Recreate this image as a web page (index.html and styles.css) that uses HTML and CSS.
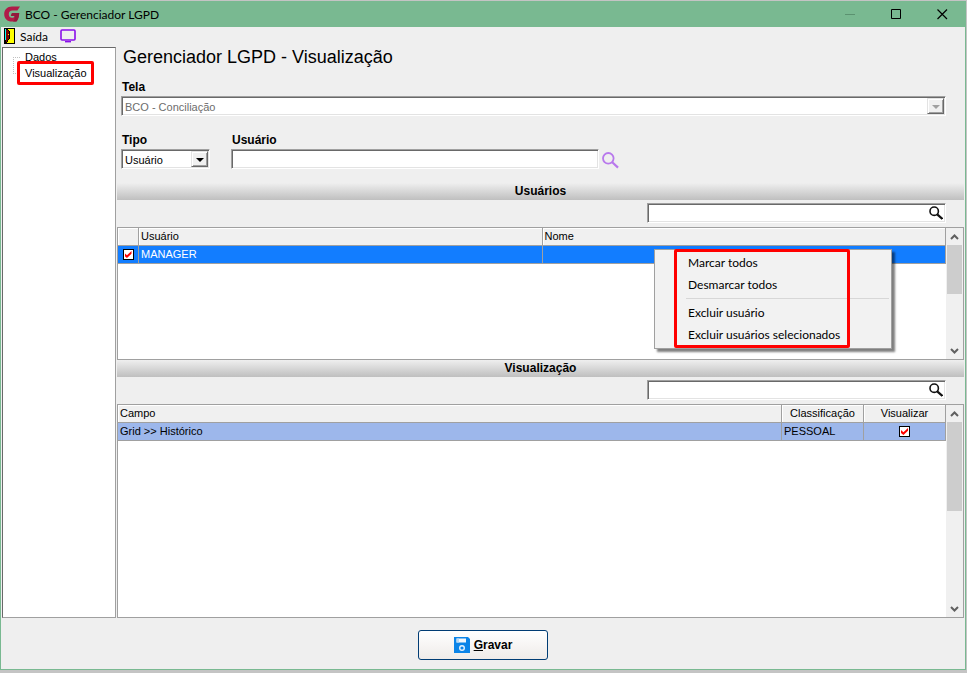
FILE: index.html
```html
<!DOCTYPE html>
<html lang="pt-BR">
  <head>
    <meta charset="UTF-8" />
    <meta name="viewport" content="width=device-width, initial-scale=1.0" />
    <title>BCO - Gerenciador LGPD</title>
    <link rel="stylesheet" href="styles.css">
  </head>

  <body>
    <div class="window">
      <header class="titlebar">
        <svg class="logo" width="16" height="16" viewBox="0 0 16 16">
          <path d="M16 0.4 L8 0.4 C3.2 0.4 0.2 3.6 0.2 8 C0.2 12.6 3.4 15.6 7.8 15.6 L12.4 15.6 C14.2 13.6 15 11 15.2 7 L8 7 L6.8 10 L10.6 10 C10.2 11.4 9.2 11.8 8 11.8 C5.8 11.8 4.8 10.2 4.8 8.2 C4.8 5.8 6.2 4.6 8.4 4.6 L13.4 4.6 Z" fill="#b01c48" />
          <path d="M8 7 L15.2 7 C15 11 14.2 13.6 12.4 15.6 L9 15.6 C10.6 14.4 11 12 10.6 10 L6.8 10 Z" fill="#93183c" />
        </svg>
        <h1>BCO - Gerenciador LGPD</h1>
        <div class="window-buttons">
          <button type="button" aria-label="Minimizar" disabled>
            <svg width="11" height="11" viewBox="0 0 11 11"><path d="M0 5.5H10" stroke="#5b9270" /></svg>
          </button>
          <button type="button" aria-label="Maximizar">
            <svg width="11" height="11" viewBox="0 0 11 11"><path d="M.5 .5H9.5V9.5H.5Z" stroke="#000" fill="none" /></svg>
          </button>
          <button type="button" aria-label="Fechar">
            <svg width="11" height="11" viewBox="0 0 11 11"><path d="M.5 .5L10 10M10 .5L.5 10" stroke="#000" stroke-width="1.2" /></svg>
          </button>
        </div>
      </header>

      <div class="toolbar">
        <button type="button">
          <svg width="11" height="16" viewBox="0 0 11 16" shape-rendering="crispEdges">
            <path d="M0 0H11V16H0Z" fill="#000" />
            <path d="M1 1H10V15H1Z" fill="#ff0" />
            <path d="M1 1H2V12H1Z" fill="#0ff" />
            <path d="M2 1H4V2H5V3H6V11H5V12H4V14H3V15H1V12H2Z" fill="#000" />
            <path d="M2 2H4V3H5V11H4V12H3V14H2Z" fill="#800000" />
            <path d="M4 6H5V7H4Z" fill="#ff0" />
          </svg>
          Saída
        </button>
        <button type="button" aria-label="Tela">
          <svg width="16" height="14" viewBox="0 0 16 14">
            <rect x="1" y="1" width="14" height="10" rx="1" fill="none" stroke="#8a10ea" stroke-width="1.6" />
            <path d="M5 12H11V13.4H5Z" fill="#8a10ea" />
          </svg>
        </button>
      </div>

      <div class="content">
        <nav class="tree">
          <ul>
            <li><a href="#dados">Dados</a></li>
            <li><a href="#visualizacao">Visualização</a></li>
          </ul>
          <div class="mark mark-tree"></div>
        </nav>

        <main class="main">
          <form class="filters">
            <h2>Gerenciador LGPD - Visualização</h2>
            <div class="field">
              <label for="tela">Tela</label>
              <div class="combo disabled">
                <select id="tela" disabled>
                  <option>BCO - Conciliação</option>
                </select>
                <span class="arrow"></span>
              </div>
            </div>
            <div class="row">
              <div class="field tipo">
                <label for="tipo">Tipo</label>
                <div class="combo">
                  <select id="tipo">
                    <option>Usuário</option>
                    <option>Grupo</option>
                  </select>
                  <span class="arrow"></span>
                </div>
              </div>
              <div class="field usuario">
                <label for="usuario">Usuário</label>
                <input type="text" id="usuario" class="box" />
              </div>
              <button type="button" class="lookup" aria-label="Pesquisar usuário">
                <svg width="17" height="17" viewBox="0 0 17 17" fill="none" stroke="#b878ec">
                  <circle cx="6.3" cy="6.3" r="5.3" stroke-width="1.8" />
                  <path d="M10 10L16 15.6" stroke-width="2.2" />
                </svg>
              </button>
            </div>
          </form>

          <h3 class="band">Usuários</h3>
          <div class="search">
            <input type="text" class="box" aria-label="Pesquisar em usuários" />
            <svg width="14" height="14" viewBox="0 0 14 14" fill="none" stroke="#111">
              <circle cx="5.2" cy="5.2" r="4.2" stroke-width="1.6" />
              <path d="M8.2 8.4L13.4 13" stroke-width="2.2" />
            </svg>
          </div>
          <div class="panel panel-users">
            <div class="table-area">
              <table>
                <colgroup>
                  <col class="col-check" />
                  <col />
                  <col />
                </colgroup>
                <thead>
                  <tr><th></th><th>Usuário</th><th>Nome</th></tr>
                </thead>
                <tbody>
                  <tr class="selected">
                    <td class="center"><input type="checkbox" aria-label="MANAGER" checked /></td>
                    <td>MANAGER</td>
                    <td></td>
                  </tr>
                </tbody>
              </table>
            </div>
            <div class="scrollbar">
              <svg width="9" height="6" viewBox="0 0 9 6"><path d="M1 5L4.5 1.5L8 5" /></svg>
              <div class="thumb"></div>
              <svg width="9" height="6" viewBox="0 0 9 6"><path d="M1 1L4.5 4.5L8 1" /></svg>
            </div>

            <div class="context-menu">
              <button type="button">Marcar todos</button>
              <button type="button">Desmarcar todos</button>
              <hr />
              <button type="button">Excluir usuário</button>
              <button type="button">Excluir usuários selecionados</button>
              <div class="mark mark-menu"></div>
            </div>
          </div>

          <h3 class="band">Visualização</h3>
          <div class="search">
            <input type="text" class="box" aria-label="Pesquisar em visualização" />
            <svg width="14" height="14" viewBox="0 0 14 14" fill="none" stroke="#111">
              <circle cx="5.2" cy="5.2" r="4.2" stroke-width="1.6" />
              <path d="M8.2 8.4L13.4 13" stroke-width="2.2" />
            </svg>
          </div>
          <div class="panel panel-fields">
            <div class="table-area">
              <table>
                <colgroup>
                  <col />
                  <col class="col-small" />
                  <col class="col-small" />
                </colgroup>
                <thead>
                  <tr><th>Campo</th><th class="center">Classificação</th><th class="center">Visualizar</th></tr>
                </thead>
                <tbody>
                  <tr class="current">
                    <td>Grid &gt;&gt; Histórico</td>
                    <td>PESSOAL</td>
                    <td class="center"><input type="checkbox" aria-label="Visualizar Histórico" checked /></td>
                  </tr>
                </tbody>
              </table>
            </div>
            <div class="scrollbar">
              <svg width="9" height="6" viewBox="0 0 9 6"><path d="M1 5L4.5 1.5L8 5" /></svg>
              <div class="thumb"></div>
              <svg width="9" height="6" viewBox="0 0 9 6"><path d="M1 1L4.5 4.5L8 1" /></svg>
            </div>
          </div>
        </main>
      </div>

      <footer class="footer">
        <button type="button" class="save">
          <svg width="16" height="16" viewBox="0 0 16 16">
            <path d="M0 0H14L16 2V16H0Z" fill="#0b84e8" />
            <rect x="2.5" y="1.5" width="9.5" height="4" fill="#f4f8fc" />
            <path d="M2.5 1.5H5V5.5H2.5Z" fill="#b9d9f5" />
            <circle cx="8" cy="11" r="2.3" fill="none" stroke="#e4f1fc" stroke-width="1.4" />
          </svg>
          <span><u>G</u>ravar</span>
        </button>
      </footer>
    </div>
  </body>
</html>
```

FILE: styles.css
```css
* {
  box-sizing: border-box;
}

body {
  margin: 0;
  height: 100vh;
  padding: 1px 1px 3px 0;
  background-color: #c4c4c4;
  font-family: "Liberation Sans", Arial, sans-serif;
  font-size: 11px;
  color: #000;
}

h1,
h2,
h3,
ul {
  margin: 0;
  padding: 0;
  font-weight: normal;
}

button,
input,
select {
  font: inherit;
  color: inherit;
  margin: 0;
}

.window {
  display: flex;
  flex-direction: column;
  height: 100%;
  background-color: #efefef;
  border: 1px solid #79b991;
  border-top: none;
}

/* Title bar and toolbar */
.titlebar {
  display: flex;
  align-items: center;
  height: 26px;
  padding-left: 3px;
  gap: 5px;
  background-color: #79b991;
}

.titlebar h1,
.toolbar,
.context-menu {
  font-family: Lato, "Open Sans", sans-serif;
  font-size: 12px;
}

.window-buttons {
  display: flex;
  margin-left: auto;
}

.window-buttons button {
  display: flex;
  align-items: center;
  justify-content: center;
  width: 46px;
  height: 26px;
  padding: 0;
  background: none;
  border: none;
}

.toolbar {
  display: flex;
  align-items: center;
  gap: 12px;
  height: 20px;
  padding: 0 0 2px 3px;
}

.toolbar button {
  display: flex;
  align-items: center;
  gap: 5px;
  height: 18px;
  padding: 0;
  background: none;
  border: none;
}

.content {
  display: flex;
  flex: 1;
  gap: 1px;
  min-height: 0;
  padding: 0 1px;
}

/* Left tree */
.tree {
  position: relative;
  width: 114px;
  padding: 1px 0 0 10px;
  background-color: #fff;
  border: 1px solid #a0a0a0;
  border-left-color: #696969;
  border-top-color: #696969;
}

.tree ul {
  list-style: none;
}

.tree li {
  display: flex;
  align-items: center;
  gap: 4px;
  height: 16px;
  line-height: 16px;
}

.tree li::before {
  content: "";
  width: 8px;
  height: 16px;
  background:
    repeating-linear-gradient(90deg, #c0c0c0 0 1px, transparent 1px 2px) 0 8px / 8px 1px no-repeat,
    repeating-linear-gradient(#c0c0c0 0 1px, transparent 1px 2px) 0 0 / 1px 8px no-repeat;
}

.tree li:first-child::before {
  background-position: 0 8px, 0 8px;
}

.tree a {
  color: #000;
  text-decoration: none;
}

.mark {
  position: absolute;
  border: 3px solid #f00;
  border-radius: 2px;
  pointer-events: none;
}

.mark-tree {
  left: 14px;
  top: 13px;
  width: 77px;
  height: 24px;
}

/* Form fields */
.main {
  display: flex;
  flex-direction: column;
  flex: 1;
  min-width: 0;
}

.filters {
  height: 136px;
  padding: 0 18px 0 4px;
}

.filters h2 {
  height: 33px;
  padding-left: 2px;
  font-size: 18px;
  line-height: 21px;
}

.field label {
  display: block;
  height: 16px;
  padding-left: 1px;
  font-size: 12px;
  font-weight: bold;
  line-height: 14px;
}

.row {
  display: flex;
  align-items: flex-end;
  margin-top: 17px;
}

.tipo {
  width: 89px;
}

.usuario {
  width: 368px;
  margin-left: 21px;
}

.box,
.combo {
  display: block;
  width: 100%;
  height: 20px;
  padding: 0 4px;
  background-color: #fff;
  border: 1px solid #fff;
  border-top-color: #a0a0a0;
  border-left-color: #a0a0a0;
  border-radius: 0;
  box-shadow: inset 1px 1px #696969, inset -1px -1px #e3e3e3;
}

.combo {
  position: relative;
  padding: 1px;
}

.combo select {
  display: block;
  width: 100%;
  height: 17px;
  padding: 0 2px;
  appearance: none;
  background: none;
  border: none;
  outline: none;
}

.combo select:disabled {
  color: #6d6d6d;
  opacity: 1;
}

.combo .arrow {
  position: absolute;
  top: 1px;
  right: 1px;
  width: 17px;
  height: 16px;
  background-color: #f0f0f0;
  border: 1px solid #696969;
  border-top-color: #e3e3e3;
  border-left-color: #e3e3e3;
  box-shadow: inset 1px 1px #fff, inset -1px -1px #a0a0a0;
  pointer-events: none;
}

.combo .arrow::after {
  content: "";
  position: absolute;
  top: 6px;
  left: 4px;
  border: 4px solid transparent;
  border-top-color: #000;
  border-bottom: none;
}

.combo.disabled .arrow::after {
  border-top-color: #a0a0a0;
}

.lookup {
  display: flex;
  padding: 0;
  margin-left: 3px;
  background: none;
  border: none;
}

/* Section titles */
.band {
  height: 17px;
  flex: none;
  background: linear-gradient(#efefef, #bfbfbf);
  font-size: 12px;
  font-weight: bold;
  line-height: 17px;
  text-align: center;
}

.search {
  display: flex;
  align-items: center;
  justify-content: flex-end;
  height: 27px;
  flex: none;
  padding: 0 18px 1px 0;
}

.search .box {
  width: 299px;
  padding-right: 22px;
}

.search svg {
  margin-left: -17px;
  margin-right: 3px;
}

/* Grids */
.panel {
  position: relative;
  display: flex;
  background-color: #fff;
  border: 1px solid #a0a0a0;
}

.panel-users {
  height: 133px;
  flex: none;
}

.panel-fields {
  flex: 1;
  min-height: 0;
}

.table-area {
  flex: 1;
}

table {
  width: 100%;
  table-layout: fixed;
  border-collapse: separate;
  border-spacing: 0;
}

.col-check {
  width: 21px;
}

.col-small {
  width: 82px;
}

th,
td {
  height: 18px;
  padding: 0 2px;
  border-right: 1px solid #a0a0a0;
  border-bottom: 1px solid #a0a0a0;
  font-weight: normal;
  line-height: 17px;
  text-align: left;
  white-space: nowrap;
}

th {
  background-color: #f0f0f0;
  box-shadow: inset 1px 1px #fff;
}

.center {
  text-align: center;
}

.selected td {
  background-color: #127dff;
  color: #fff;
}

.current td {
  background-color: #9db7eb;
}

td input[type="checkbox"] {
  display: block;
  width: 11px;
  height: 11px;
  margin: 0 auto;
  appearance: none;
  background-color: #fff;
  border: 1px solid #000;
}

td input[type="checkbox"]:checked::after {
  content: "";
  display: block;
  width: 7px;
  height: 7px;
  margin: 1px;
  background-color: #f00;
  clip-path: polygon(0 30%, 35% 60%, 100% 0, 100% 40%, 35% 100%, 0 70%);
}

.scrollbar {
  display: flex;
  flex-direction: column;
  align-items: center;
  width: 17px;
  padding: 6px 1px 5px;
  background-color: #f0f0f0;
}

.scrollbar svg {
  flex: none;
  fill: none;
  stroke: #606060;
  stroke-width: 2;
}

.scrollbar .thumb {
  width: 100%;
  height: 49px;
  margin: 5px 0 auto;
  background-color: #cdcdcd;
}

.panel-fields .thumb {
  height: 89px;
}

/* Popup menu */
.context-menu {
  position: absolute;
  top: 21px;
  right: 71px;
  width: 238px;
  padding: 2px;
  background-color: #f2f2f2;
  border: 1px solid #a0a0a0;
  box-shadow: 3px 3px 2px rgba(0, 0, 0, 0.5);
}

.context-menu button {
  display: block;
  width: 100%;
  height: 22px;
  padding: 0 0 0 31px;
  background: none;
  border: none;
  line-height: 22px;
  text-align: left;
  white-space: nowrap;
}

.context-menu hr {
  height: 1px;
  margin: 2px 0 3px 29px;
  background-color: #d7d7d7;
  border: none;
}

.mark-menu {
  top: -1px;
  left: 19px;
  width: 176px;
  height: 99px;
}

/* Footer */
.footer {
  display: flex;
  justify-content: center;
  align-items: center;
  height: 51px;
  padding-top: 2px;
}

.save {
  display: flex;
  align-items: center;
  justify-content: center;
  gap: 4px;
  width: 130px;
  height: 30px;
  background: linear-gradient(#fff, #efebe9);
  border: 1px solid #003c74;
  border-radius: 3px;
  font-size: 12px;
  font-weight: bold;
}
```
